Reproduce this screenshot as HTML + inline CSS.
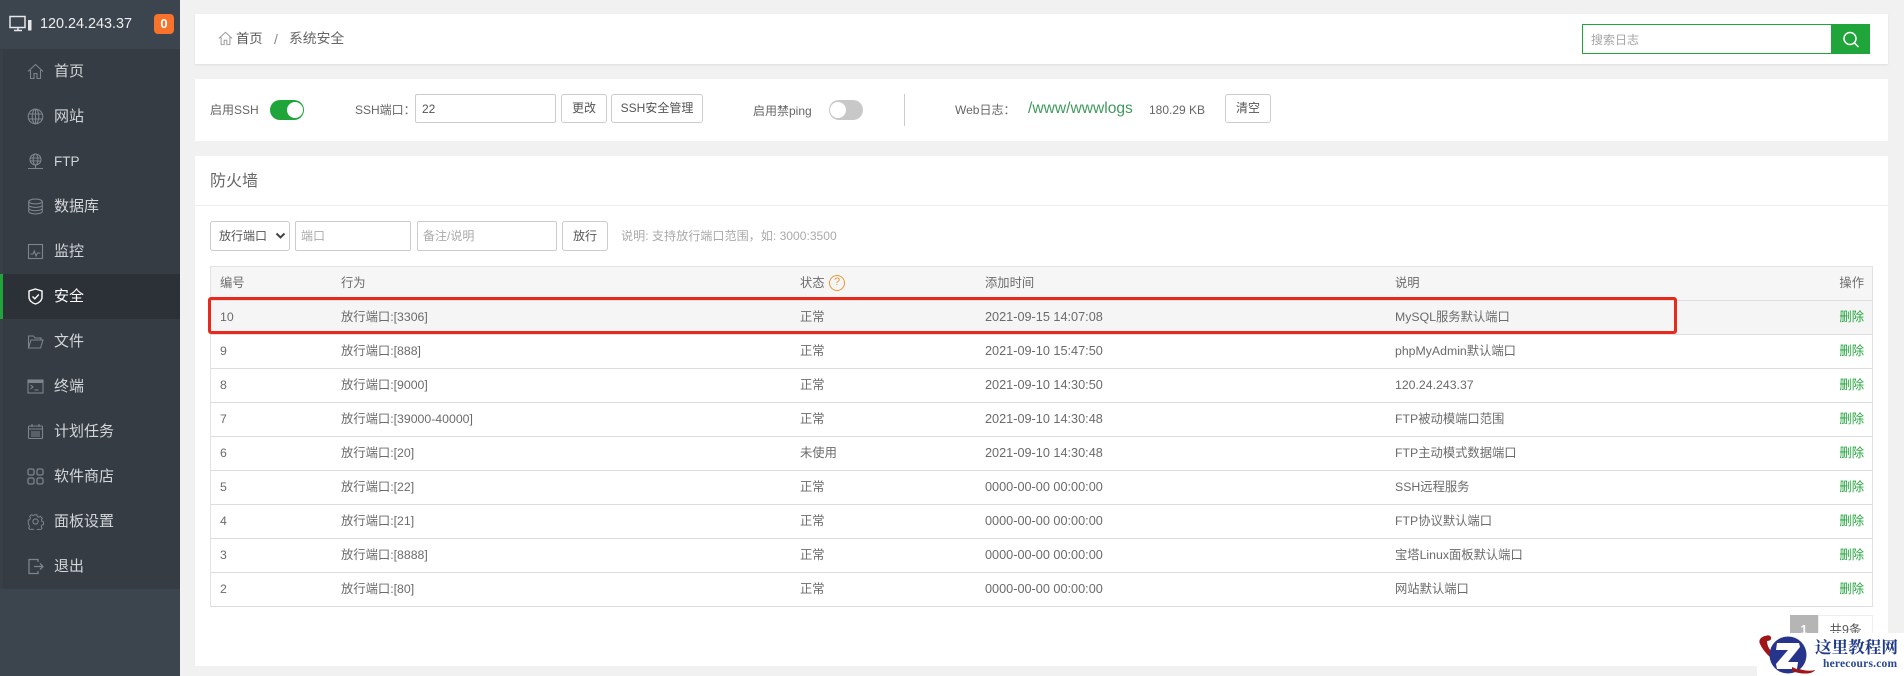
<!DOCTYPE html>
<html lang="zh-CN">
<head>
<meta charset="utf-8">
<title>系统安全</title>
<style>
*{box-sizing:border-box}
html,body{margin:0;padding:0;width:1904px;height:676px;overflow:hidden;background:#f1f1f1;font-family:"Liberation Sans","Noto Sans CJK SC",sans-serif;color:#666}
.a{position:absolute}
.t{position:absolute;white-space:nowrap;transform:translateY(-50%);line-height:16px}
#side{left:0;top:0;width:180px;height:676px;background:#3c444d}
#strip{left:0;top:49px;width:3px;height:540px;background:#383f47}
#menu{left:3px;top:49px;width:177px;height:540px;background:#353c44}
.mi{position:absolute;left:-3px;width:180px;height:45px}
.mi svg{position:absolute;left:27px;top:14px;width:17px;height:17px;fill:none;stroke:#7d848b;stroke-width:1.1}
.mi span{position:absolute;left:54px;top:0;line-height:45px;font-size:15px;color:#d3d6d9;white-space:nowrap}
.mi.on{background:#2c3138}
.mi.on:before{content:"";position:absolute;left:0;top:0;width:3px;height:45px;background:#20a53a}
.mi.on span{color:#fff}
.mi.on svg{stroke:#fff}
.panel{position:absolute;left:195px;width:1693px;background:#fff}
.box{position:absolute;background:#fff;border:1px solid #ccc;border-radius:2px}
.btn{position:absolute;background:#fff;border:1px solid #ccc;border-radius:3px;text-align:center;font-size:12px;color:#555;height:29px;line-height:27px}
.f{font-size:12px}
table{position:absolute;left:210px;top:266px;width:1663px;border-collapse:separate;border-spacing:0;table-layout:fixed;font-size:12.3px;line-height:14px;color:#6b6b6b;border-left:1px solid #e2e2e2;border-right:1px solid #e2e2e2}
th,td{padding:0 0 1px 9px;font-weight:normal;text-align:left;height:34px;border-bottom:1px solid #ddd;white-space:nowrap;vertical-align:middle}
th{height:35px;background:#f6f6f6;border-top:1px solid #e2e2e2;color:#6b6b6b}
td.op,th.op{text-align:right;padding:0 8px 1px 0}
td.op{color:#20a53a}
td.d{font-size:12.7px}
tr.hl td{background:#f5f5f5}
.sw{position:absolute;width:34px;height:20px;border-radius:10px}
.sw i{position:absolute;top:2px;width:16px;height:16px;border-radius:50%;background:#fff}
</style>
</head>
<body>
<div id="side" class="a"></div>
<div id="strip" class="a"></div>
<svg class="a" style="left:9px;top:15px;width:24px;height:18px" viewBox="0 0 24 18" fill="none" stroke="#e6e8ea" stroke-width="1.5"><rect x="1" y="1.500" width="15" height="11"/><path d="M5 15.500h8M9 13v2.500"/><rect x="19" y="5" width="3.500" height="10.500" fill="#e6e8ea" stroke="none"/></svg>
<div class="t" style="left:40px;top:24px;font-size:14.400px;color:#eceef0">120.24.243.37</div>
<div class="a" style="left:154px;top:14px;width:20px;height:20px;background:#f7722a;border-radius:4px;color:#fff;font-weight:bold;font-size:13px;line-height:20px;text-align:center">0</div>

<div id="menu" class="a">
<div class="mi" style="top:0"><svg viewBox="0 0 17 17"><path d="M1 8.500 8.500 1.500 16 8.500M3.500 7v8.500h3.500v-5h3v5h3.500V7"/></svg><span>首页</span></div>
<div class="mi" style="top:45px"><svg viewBox="0 0 17 17"><circle cx="8.500" cy="8.500" r="7.300"/><ellipse cx="8.500" cy="8.500" rx="3.300" ry="7.300"/><path d="M1.500 6h14M1.500 11h14M8.500 1v15"/></svg><span>网站</span></div>
<div class="mi" style="top:90px"><svg viewBox="0 0 17 17"><circle cx="8.500" cy="6.500" r="5.500"/><ellipse cx="8.500" cy="6.500" rx="2.400" ry="5.500"/><path d="M3 5h11M3 8h11M8.500 12v3M1 15.500h15"/></svg><span style="font-size:13.500px">FTP</span></div>
<div class="mi" style="top:135px"><svg viewBox="0 0 17 17"><ellipse cx="8.500" cy="3.500" rx="6.800" ry="2.400"/><path d="M1.700 3.500v10c0 1.300 3 2.400 6.800 2.400s6.800-1.100 6.800-2.400v-10M1.700 7c0 1.300 3 2.400 6.800 2.400s6.800-1.100 6.800-2.400M1.700 10.300c0 1.300 3 2.400 6.800 2.400s6.800-1.100 6.800-2.400"/></svg><span>数据库</span></div>
<div class="mi" style="top:180px"><svg viewBox="0 0 17 17"><rect x="1.500" y="1.500" width="14" height="14"/><path d="M3.500 11h2.500l1.300-3 1.800 5 1.300-3h3"/></svg><span>监控</span></div>
<div class="mi on" style="top:225px"><svg viewBox="0 0 17 17" style="stroke-width:1.400"><path d="M8.500 1 15 3v6c0 3.500-3 6-6.500 7C5 15 2 12.500 2 9V3z"/><path d="M5.500 8.500l2.300 2.300 4-4.300"/></svg><span>安全</span></div>
<div class="mi" style="top:270px"><svg viewBox="0 0 17 17"><path d="M1.500 15V3h5l1.500 2h6v2M1.500 15l2.500-8h12l-2.500 8z"/></svg><span>文件</span></div>
<div class="mi" style="top:315px"><svg viewBox="0 0 17 17"><rect x="1" y="2" width="15" height="13"/><path d="M1 2h15v2.500H1z" fill="#7d848b"/><path d="M3.500 7l2.500 2-2.500 2M7.500 12h4"/></svg><span>终端</span></div>
<div class="mi" style="top:360px"><svg viewBox="0 0 17 17"><rect x="1.500" y="3" width="14" height="12.500" rx="1"/><path d="M1.500 6h14M5 1v3M12 1v3M4 9h9M4 11h9M4 13h9"/></svg><span>计划任务</span></div>
<div class="mi" style="top:405px"><svg viewBox="0 0 17 17" style="stroke-width:1.300"><rect x="1" y="1" width="6" height="6" rx="1.500"/><rect x="10" y="1" width="6" height="6" rx="1.500"/><rect x="1" y="10" width="6" height="6" rx="1.500"/><rect x="10" y="10" width="6" height="6" rx="1.500"/></svg><span>软件商店</span></div>
<div class="mi" style="top:450px"><svg viewBox="0 0 17 17"><circle cx="8.500" cy="8.500" r="2.600"/><path d="M7 1h3l.5 2 1.800 .8 1.800-1 2 2.200-1 1.700.7 1.800 1.700.5v3l-1.900.5-.7 1.800 1 1.700-2.100 2.100-1.700-1-1.800.7-.5 1.700H7l-.5-1.800-1.800-.7-1.700 1-2.100-2.100 1-1.700-.8-1.800L.5 10V7l1.700-.5.8-1.800-1-1.700L4.100 1l1.700 1 1.700-.8z" transform="translate(.8 .8) scale(.9)"/></svg><span>面板设置</span></div>
<div class="mi" style="top:495px"><svg viewBox="0 0 17 17" style="stroke-width:1.300"><path d="M11 4V1.500H2v14h9V13M7 8.500h9M13 5.500l3 3-3 3"/></svg><span>退出</span></div>
</div>

<!-- top -->
<div class="panel" style="top:14px;height:50px;box-shadow:0 1px 2px rgba(0,0,0,.08)"></div>
<svg class="a" style="left:218px;top:31px;width:15px;height:15px" viewBox="0 0 17 17" fill="none" stroke="#999" stroke-width="1.100"><path d="M1 8.500 8.500 1.500 16 8.500M3.500 7v8.500h3.500v-5h3v5h3.500V7"/></svg>
<div class="t" style="left:236px;top:39px;font-size:13.300px;color:#555">首页</div>
<div class="t" style="left:274px;top:39px;font-size:14px;color:#888">/</div>
<div class="t" style="left:289px;top:39px;font-size:13.800px;color:#666">系统安全</div>
<div class="a" style="left:1582px;top:24px;width:250px;height:30px;border:1px solid #20a53a;background:#fff"></div>
<div class="t f" style="left:1591px;top:39.500px;color:#a5a5a5">搜索日志</div>
<div class="a" style="left:1832px;top:24px;width:38px;height:30px;background:#20a53a"></div>
<svg class="a" style="left:1842px;top:31px;width:18px;height:17px" viewBox="0 0 18 17" fill="none" stroke="#fff" stroke-width="1.500"><circle cx="8" cy="7.500" r="6"/><path d="M12.500 12l4 4"/></svg>

<!-- second -->
<div class="panel" style="top:79px;height:62px"></div>
<div class="t f" style="left:210px;top:110px;color:#666">启用SSH</div>
<div class="sw" style="left:270px;top:100px;background:#20a53a"><i style="left:17px;top:2px"></i></div>
<div class="t f" style="left:355px;top:110px;color:#666">SSH端口：</div>
<div class="box" style="left:415px;top:94px;width:141px;height:29px"></div>
<div class="t f" style="left:422px;top:109px;color:#555">22</div>
<div class="btn" style="left:561px;top:94px;width:46px">更改</div>
<div class="btn" style="left:611px;top:94px;width:92px">SSH安全管理</div>
<div class="t f" style="left:753px;top:111px;color:#666">启用禁ping</div>
<div class="sw" style="left:829px;top:100px;background:#c8c8c8"><i style="left:1px;top:2px"></i></div>
<div class="a" style="left:904px;top:94px;width:1px;height:32px;background:#ccc"></div>
<div class="t f" style="left:955px;top:110px;color:#666">Web日志：</div>
<div class="t" style="left:1028px;top:109px;font-size:15.600px;color:#3f9a5e">/www/wwwlogs</div>
<div class="t f" style="left:1149px;top:110px;color:#666">180.29 KB</div>
<div class="btn" style="left:1225px;top:94px;width:46px">清空</div>

<!-- third -->
<div class="panel" style="top:156px;height:510px"></div>
<div class="a" style="left:195px;top:205px;width:1693px;height:1px;background:#eee"></div>
<div class="t" style="left:210px;top:181.500px;font-size:16px;color:#666">防火墙</div>
<div class="box" style="left:210px;top:221px;width:80px;height:30px;border-radius:3px"></div>
<div class="t f" style="left:219px;top:236px;color:#555">放行端口</div>
<svg class="a" style="left:275px;top:232px;width:11px;height:8px" viewBox="0 0 11 8" fill="none" stroke="#444" stroke-width="2"><path d="M1.500 1.500 5.500 5.500 9.500 1.500"/></svg>
<div class="box" style="left:295px;top:221px;width:116px;height:30px"></div>
<div class="t f" style="left:301px;top:236px;color:#aaa">端口</div>
<div class="box" style="left:417px;top:221px;width:140px;height:30px"></div>
<div class="t f" style="left:423px;top:236px;color:#aaa">备注/说明</div>
<div class="btn" style="left:562px;top:221px;width:46px;height:30px;line-height:28px">放行</div>
<div class="t" style="left:621px;top:236px;font-size:12.100px;color:#aaa">说明: 支持放行端口范围，如: 3000:3500</div>

<table>
<colgroup><col style="width:121px"><col style="width:459px"><col style="width:185px"><col style="width:410px"><col style="width:400px"><col></colgroup>
<tr><th>编号</th><th>行为</th><th>状态</th><th>添加时间</th><th>说明</th><th class="op">操作</th></tr>
<tr class="hl"><td>10</td><td>放行端口:[3306]</td><td>正常</td><td class="d">2021-09-15 14:07:08</td><td>MySQL服务默认端口</td><td class="op">删除</td></tr>
<tr><td>9</td><td>放行端口:[888]</td><td>正常</td><td class="d">2021-09-10 15:47:50</td><td>phpMyAdmin默认端口</td><td class="op">删除</td></tr>
<tr><td>8</td><td>放行端口:[9000]</td><td>正常</td><td class="d">2021-09-10 14:30:50</td><td>120.24.243.37</td><td class="op">删除</td></tr>
<tr><td>7</td><td>放行端口:[39000-40000]</td><td>正常</td><td class="d">2021-09-10 14:30:48</td><td>FTP被动模端口范围</td><td class="op">删除</td></tr>
<tr><td>6</td><td>放行端口:[20]</td><td>未使用</td><td class="d">2021-09-10 14:30:48</td><td>FTP主动模式数据端口</td><td class="op">删除</td></tr>
<tr><td>5</td><td>放行端口:[22]</td><td>正常</td><td class="d">0000-00-00 00:00:00</td><td>SSH远程服务</td><td class="op">删除</td></tr>
<tr><td>4</td><td>放行端口:[21]</td><td>正常</td><td class="d">0000-00-00 00:00:00</td><td>FTP协议默认端口</td><td class="op">删除</td></tr>
<tr><td>3</td><td>放行端口:[8888]</td><td>正常</td><td class="d">0000-00-00 00:00:00</td><td>宝塔Linux面板默认端口</td><td class="op">删除</td></tr>
<tr><td>2</td><td>放行端口:[80]</td><td>正常</td><td class="d">0000-00-00 00:00:00</td><td>网站默认端口</td><td class="op">删除</td></tr>
</table>

<div class="a" style="left:829px;top:275px;width:16px;height:16px;border:1.500px solid #e8973a;border-radius:50%;color:#e8973a;font-size:11px;line-height:13px;text-align:center">?</div>
<div class="a" style="left:208px;top:297px;width:1469px;height:37px;border:3px solid #e62a1e;border-radius:3px"></div>

<!-- pagination -->
<div class="a" style="left:1790px;top:615px;width:28px;height:30px;background:#b5b5b5;color:#fff;font-weight:bold;font-size:12.500px;line-height:30px;text-align:center">1</div>
<div class="a" style="left:1818px;top:615px;width:55px;height:30px;border:1px solid #eee;font-size:12.500px;line-height:28px;text-align:center;color:#555">共9条</div>

<!-- watermark -->
<div class="a" style="left:1757px;top:633px;width:147px;height:43px;background:#fff"></div>
<svg class="a" style="left:1757px;top:633px;width:60px;height:43px" viewBox="0 0 60 43">
<path d="M11 2.500C4 3 1 7 3 11 8 22 22 33 35 38c10 3.500 20 3.500 23-1-6 2-16 0-26-5C20 26 10 17 10 8l2-.5c3 0 3-5-1-5z" fill="#a01618"/>
<circle cx="31" cy="22" r="18.500" fill="#27348b"/>
<path d="M20 10h22l1 4-12 15h10l-1 7H20l-1-5 12-14H19z" fill="#fff"/>
<path d="M35 34c8 4 17 5 23 3-3 4.500-13 4.500-23 1z" fill="#a01618"/>
<circle cx="11" cy="5" r="2.800" fill="#a01618"/>
</svg>
<div class="t" style="left:1815px;top:646px;font-family:'Noto Serif CJK SC','Liberation Serif',serif;font-weight:bold;font-size:16.600px;line-height:20px;color:#1f3a8a">这里教程网</div>
<div class="t" style="left:1823px;top:664px;font-family:'Liberation Serif',serif;font-weight:bold;font-size:11.500px;letter-spacing:.2px;color:#27479a">herecours.com</div>
</body>
</html>
